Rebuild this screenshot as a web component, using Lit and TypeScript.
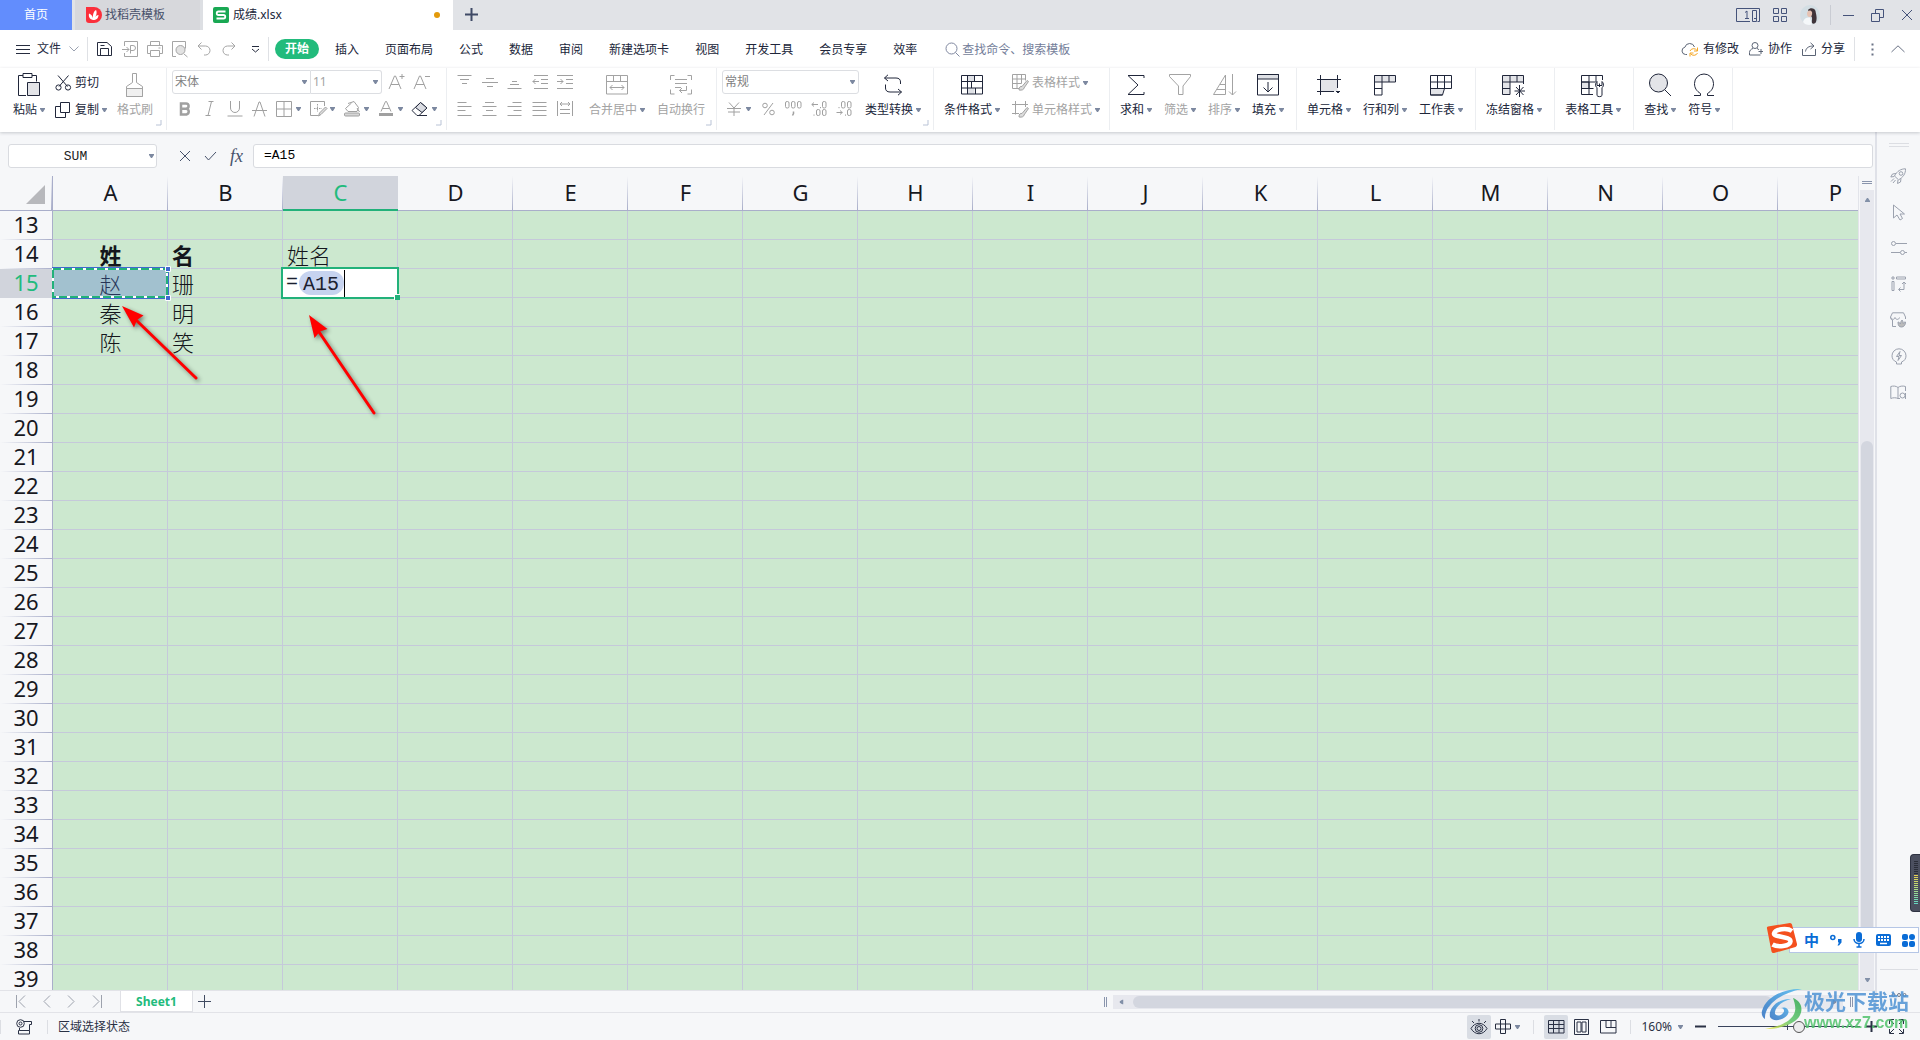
import { LitElement, html, svg, css, nothing } from "lit";
import { customElement } from "lit/decorators.js";
import { classMap } from "lit/directives/class-map.js";

const ic = (w: number, h: number, body: unknown) => html`<svg class="ic" width=${w} height=${h} viewBox="0 0 ${w} ${h}" aria-hidden="true">${body}</svg>`;
const caret = html`<svg class="caret" width="5" height="4" viewBox="0 0 5 4" aria-hidden="true"><path d="M0 0h5v1L3 4H2L0 1z" /></svg>`;
const corner = html`<svg class="corner" width="6" height="6" viewBox="0 0 6 6" aria-hidden="true"><path d="M5 0v5H0" /></svg>`;

const I = {
  menu: ic(15, 11, svg`<path d="M0 1.5h14M0 5.5h14M0 9.5h14"/>`),
  chevDown: ic(10, 6, svg`<path d="M.5.5l4.5 4.5L9.5.5"/>`),
  save: ic(15, 16, svg`<path d="M.5 1.5h9.500l4.500 4v9H.5zM3.500 14.500v-7h8v7M3.500 4.500h4"/>`),
  exportPdf: ic(17, 16, svg`<path d="M2.500 5V.5h13v15h-13V12M0 8.500h7M4.500 6l2.500 2.500L4.500 11M8.500 12.500V4.500h2.500a2.500 2.500 0 0 1 0 5H9"/>`),
  print: ic(16, 16, svg`<path d="M3.500 4.500v-4h9v4M3.500 12.500h-3v-8h15v8h-3M3.500 9.500h9v6h-9zM11.500 7h2"/>`),
  preview: ic(16, 16, svg`<path d="M4 15.500H.5V.5h13v7M12 13l3.500 3"/><circle cx="8.500" cy="9" r="4.500" fill="#e2e2e2"/>`),
  undo: ic(14, 14, svg`<path d="M4.500.5L1 4l3.500 3.500M1 4h7.500a4.500 4.500 0 0 1 0 9H7"/>`),
  redo: ic(14, 14, svg`<path d="M9.500.5L13 4 9.500 7.500M13 4H5.500a4.500 4.500 0 0 0 0 9H7"/>`),
  more: ic(9, 8, svg`<path d="M1 1.500h7M1 4l3.500 3L8 4"/>`),
  search: ic(15, 15, svg`<circle cx="6.500" cy="6.500" r="5.500"/><path d="M10.500 10.500l4 4"/>`),
  cloud: ic(18, 15, svg`<path d="M6 12.500H4.500a3.700 3.700 0 0 1-.6-7.300A5 5 0 0 1 13.500 5"/><g stroke="#f5a623"><path d="M9 9a4 4 0 0 1 7-.5M16.500 5.500v3.500H13M16.500 11a4 4 0 0 1-7 .5M9 14.500V11h3.500"/></g>`),
  coop: ic(15, 14, svg`<circle cx="6" cy="3.500" r="3"/><path d="M4 6.500C2 7 .5 8.500.5 10.500v2.500h11M8 6.500c1 .3 1.800.8 2 1.500M12 7v5M9.500 9.500H14"/>`),
  share: ic(15, 14, svg`<path d="M.5 7v6.500h13V7M3.500 9.500c.5-3.500 3-5.500 8-5.500M8.500.8L12 4 8.500 7"/>`),
  dots: ic(3, 13, svg`<path d="M.5 1.500h2M.5 6.500h2M.5 11.500h2" stroke-width="2"/>`),
  chevUp: ic(14, 8, svg`<path d="M.5 7L7 .8 13.500 7"/>`),
  paste: ic(22, 24, svg`<path d="M5 2.500H.5v20H8M14 2.500h4.500v6M5 .5h9v4H5z"/><path d="M9.500 9.500h12v13h-12z" fill="#e3e4e8"/>`),
  cut: ic(17, 16, svg`<path d="M3 .5l9.500 11M13.500.5L4 11.500"/><circle cx="3.500" cy="12.500" r="2.600"/><circle cx="13" cy="12.500" r="2.600"/>`),
  copy: ic(16, 16, svg`<path d="M5.500.5h9v10h-9zM5.500 4.500h-5v11h10v-5"/>`),
  brush: ic(20, 25, svg`<path d="M7.500 9.500v-9h4v9l6 4v3h-16v-3zM1.500 15.500v8h16v-8"/><path d="M1.500 15.500h16v8h-16z" fill="#f0f0f0"/>`),
  aPlus: ic(17, 17, svg`<path d="M1 16L6.500 3h1L13 16M3 11.500h8M11.500 3.500h5M14 1v5"/>`),
  aMinus: ic(18, 17, svg`<path d="M1 16L6.500 3h1L13 16M3 11.500h8M12 3.500h5"/>`),
  bold: ic(12, 14, svg`<path d="M2 1.500h5a2.600 2.600 0 0 1 0 5.200H2zM2 6.700h5.500a3 3 0 0 1 0 5.800H2z" stroke-width="2.500"/>`),
  italic: ic(10, 15, svg`<path d="M3.500.5h5M.5 14.500h5M6.500.5l-3.500 14"/>`),
  underline: ic(16, 16, svg`<path d="M3.500 0v7a4.500 4.500 0 0 0 9 0V0M.5 15h15"/>`),
  strike: ic(16, 16, svg`<path d="M2 15.500L7 1h1l5 14.500M0 9.500h15"/>`),
  borders: ic(16, 16, svg`<path d="M.5.5h15v15H.5zM8 .5v15M.5 8h15"/>`),
  pencilGrid: ic(17, 16, svg`<path d="M8 14.500H.5V.5h14V5"/><path d="M4 7.500h8M7.500 3v8" stroke-dasharray="1.500 1"/><path d="M8.500 15l1-3 6-6 1.500 1.500-6 6z" fill="#ddd"/>`),
  fill: ic(17, 16, svg`<path d="M4 2.500l6-2 4.500 6-1.500 4H4L1.500 7.500 7.500 2"/><path d="M13 7l2.500 4"/><rect x=".5" y="12" width="15" height="3" rx="1" fill="#d6d6d6"/>`),
  fontColor: ic(14, 16, svg`<path d="M2 10.500L6.500.5h1l4.500 10M3.500 7.500h7"/><path d="M0 13.500h14" stroke-width="3"/>`),
  eraser: ic(18, 16, svg`<path d="M1 9.500L9.500 1.500l6.500 5.500-8 7.500H6z" fill="#fff"/><path d="M4.500 6.500L9.500 1.500l6.500 5.500-5 4.500z" fill="#dadce2"/><path d="M6 14.500h10"/>`),
  vTop: ic(15, 14, svg`<path d="M.5.5h14M3 4.500h9M5 8.500h5"/>`),
  vMid: ic(16, 14, svg`<path d="M4 3.500h8M0 7.500h16M5 11.500h6"/>`),
  vBot: ic(15, 14, svg`<path d="M5 6.500h5M3 9.500h9M.5 13.500h14"/>`),
  outdent: ic(16, 14, svg`<path d="M2 .5h14M9 4.500h7M9 8.500h7M2 13.500h14M.8 6.500H7M3.500 4L1 6.500 3.500 9"/>`),
  indent: ic(16, 14, svg`<path d="M0 .5h16M9 4.500h7M9 8.500h7M0 13.500h16M0 6.500h6M3.500 4L6 6.500 3.500 9"/>`),
  left: ic(15, 14, svg`<path d="M.5.5h9M.5 4.500h14M.5 8.500h8M.5 13.500h14"/>`),
  center: ic(15, 14, svg`<path d="M3 .5h9M.5 4.500h14M4 8.500h7M.5 13.500h14"/>`),
  right: ic(15, 14, svg`<path d="M5.500.5h9M.5 4.500h14M6.500 8.500h8M.5 13.500h14"/>`),
  justify: ic(15, 14, svg`<path d="M.5.5h14M.5 4.500h14M.5 8.500h14M.5 13.500h14"/>`),
  distribute: ic(16, 15, svg`<path d="M.5 0v15M15.500 0v15M3 3h10M5 1L3 3l2 2M11 1l2 2-2 2M3 8.500h10M3 12.500h10"/>`),
  merge: ic(22, 20, svg`<path d="M.5.5h21v18.500H.5zM.5 6.500h21M7.500.5v6M14.500.5v6M4 12.500h14M6.500 10L4 12.500 6.500 15M15.500 10l2.500 2.500-2.500 2.500"/>`),
  wrap: ic(22, 20, svg`<path d="M4.500.5h-4V5M17.500.5h4V5M.5 14.500v4.500h4M21.500 14.500v4.500h-4M5 4.500h12M5 8.500h12M5 12.500h6M16.500 11v4.500h-7M12 13l-2.500 2.500L12 18"/>`),
  yen: ic(14, 14, svg`<path d="M2 .5l5 5.500L12 .5M0 6.500h14M1 10h12M7 6v8"/>`),
  percent: ic(13, 14, svg`<circle cx="3" cy="3.500" r="2.300"/><circle cx="10" cy="10.500" r="2.300"/><path d="M11 1L2 13"/>`),
  thousand: ic(17, 15, svg`<rect x=".5" y=".5" width="3.500" height="6.500" rx="1.500"/><rect x="6.500" y=".5" width="3.500" height="6.500" rx="1.500"/><rect x="12.500" y=".5" width="3.500" height="6.500" rx="1.500"/><path d="M8.500 10.500v2l-1 2" stroke-width="1.500"/>`),
  decMore: ic(16, 15, svg`<path d="M.8 3.500H7M3 1.500l-2.200 2L3 5.500M9.500 6v1.200M3 13.500v1.200"/><rect x="11.500" y=".5" width="3.500" height="6.500" rx="1.500"/><rect x="5.500" y="8.500" width="3.500" height="6" rx="1.500"/><rect x="11.500" y="8.500" width="3.500" height="6" rx="1.500"/>`),
  decLess: ic(16, 15, svg`<path d="M.5 11.500h6M4 9.500l2.200 2L4 13.500M9.500 13.500v1.200M3 6v1.200"/><rect x="5.500" y=".5" width="3.500" height="6.500" rx="1.500"/><rect x="11.500" y=".5" width="3.500" height="6.500" rx="1.500"/><rect x="11.500" y="8.500" width="3.500" height="6" rx="1.500"/>`),
  convert: ic(20, 22, svg`<path d="M5 .8L1.500 4 5 7M1.500 4H13c3 0 4.500 1.500 4.500 4v2M15 15l3.500 3-3.500 3.200M18.500 18H7c-3 0-4.500-1.500-4.500-4v-3.500"/>`),
  cond: ic(22, 20, svg`<path d="M6.500.5h7v6h-7zM6.500 13h7v6h-7z" fill="#dfe1e6" stroke="none"/><path d="M.5.5h21v18.500H.5zM.5 6.500h21M.5 13h21M6.500.5V13M13.500.5v6M10.500 6.500V13M6.500 13v6M14.500 13v6"/>`),
  tableStyle: ic(18, 17, svg`<path d="M7 14.500H.5V.5h13v6M.5 5h13M.5 9.500h9M5 .5v14M9.500.5v9"/><path d="M7 16c0-3 1.500-4 3-3.500l5-6 1.500 1-4.500 6.500c0 1.500-2 2.500-5 2z" fill="#ddd"/>`),
  cellStyle: ic(18, 17, svg`<path d="M3.500 0v13.500M0 3.500h16M13.500 0v6M0 12.500h7"/><path d="M7 16c0-3 1.500-4 3-3.500l5-6 1.500 1-4.500 6.500c0 1.500-2 2.500-5 2z" fill="#ddd"/>`),
  sum: ic(18, 22, svg`<path d="M17 4V1.500H1L11 11 1 20.500h16V18"/>`),
  filter: ic(22, 22, svg`<path d="M.5.5h21v2L14 12v8.500H9.500V12L.5 2.500z"/>`),
  sort: ic(23, 22, svg`<path d="M.5 20.500L12.500 1v19.500zM7 10.500h5.500M4 15.500h8.500M19.500 0v21M16 17.500l3.500 3.500 3.500-3.500"/>`),
  fillDown: ic(22, 22, svg`<path d="M.5.5h21v4.500H.5z" fill="#dfe1e6"/><path d="M.5.5h21v20.500H.5zM11 8v10M6.500 13.500L11 18l4.500-4.500"/>`),
  cell: ic(24, 20, svg`<path d="M3.500 4.500h17v12h-17z" fill="#e3e4e8" stroke="none"/><path d="M3.500 0v20M20.500 0v13M0 4.500h24M0 16.500h17M19 16.500h4" /><path d="M20 17h2" stroke-width="2"/>`),
  rowCol: ic(22, 22, svg`<path d="M.5 1.500h21V8H.5z" fill="#e3e4e8"/><path d="M.5 1.500v19.500H8V8M.5 14.500H8M8 1.500V8M15 1.500V8"/>`),
  sheet: ic(22, 22, svg`<path d="M.5 14.500h14l-2 6.500H.5z" fill="#e3e4e8"/><path d="M.5 1.500h21v13H.5zM.5 8h21M7.500 1.500v13M14.500 1.500v13M.5 14.500V21h12"/>`),
  freeze: ic(24, 23, svg`<path d="M.5 1.500h21V8H8v12.500H.5z" fill="#e3e4e8"/><path d="M.5 8H8M.5 14.500H8M8 1.500V8M15 1.500V8M21.500 8v2M17.500 11v12M12.500 17h10.500M14 13l7.500 8M21.500 13l-7.500 8"/>`),
  tableTool: ic(24, 23, svg`<path d="M.5 8H8v6.500H.5z" fill="#e3e4e8"/><path d="M12 20.500H.5V1.500h21V6M.5 8h14M.5 14.500h12M8 1.500v19M15 1.500V8M18.500 13V9.500M16 7.500c-2 2-2 5 0 6v8c.5 1.500 4.500 1.500 5 0v-8c2-1 2-4 0-6v4h-5z"/>`),
  find: ic(23, 24, svg`<circle cx="9.500" cy="10" r="9" fill="#e3e4e8"/><path d="M16 17l6 6"/>`),
  omega: ic(22, 24, svg`<path d="M1 22.500h6.500v-2C3.500 18 1.500 15 1.500 10.500a9.500 9.500 0 0 1 19 0c0 4.500-2 7.500-6 10v2H21"/>`),
  switcher: ic(24, 15, svg`<path d="M14 13.500H.5V.5h23v13h-2M16.500 2.500h4v11h-4zM18 10.500h2"/><path d="M9 4.500l2-1.500v8M9 10.500h4"/>`),
  apps: ic(14, 14, svg`<path d="M.5.5h5v5h-5zM8.500.5h5v5h-5zM.5 8.500h5v5h-5zM8.500 8.500h5v5h-5z"/>`),
  min: ic(11, 12, svg`<path d="M0 6.500h11"/>`),
  restore: ic(13, 13, svg`<path d="M.5 4.500h8v8h-8zM4.500 4.500v-4h8v8h-4"/>`),
  close: ic(12, 12, svg`<path d="M1 1l10 10M11 1L1 11"/>`),
  plus: ic(13, 13, svg`<path d="M6.500 0v13M0 6.500h13"/>`),
  x: ic(12, 12, svg`<path d="M1 1l10 10M11 1L1 11"/>`),
  check: ic(13, 10, svg`<path d="M1 5l3.500 4L12 1"/>`),
  first: ic(10, 13, svg`<path d="M.5 0v13M9 .5L3 6.500l6 6"/>`),
  prev: ic(8, 13, svg`<path d="M7 .5L1 6.500l6 6"/>`),
  next: ic(8, 13, svg`<path d="M1 .5l6 6-6 6"/>`),
  last: ic(10, 13, svg`<path d="M9.500 0v13M1 .5l6 6-6 6"/>`),
  record: ic(17, 16, svg`<circle cx="4.500" cy="4.500" r="3.800"/><circle cx="4.500" cy="4.500" r="1.500"/><path d="M8 2.500h7.500v3h-2v6M3.500 9v2.500H2.500v3.500h11v-3.500h-10"/>`),
  eye: ic(18, 17, svg`<path d="M1 10.500C5 3.500 13 3.500 17 10.500 13 17.500 5 17.500 1 10.500zM9 1v2.500M2 3l2 2M16 3l-2 2"/><circle cx="9" cy="10.500" r="3.800"/><circle cx="9" cy="10.500" r="2"/>`),
  cross: ic(17, 16, svg`<path d="M5.500.5h5v14h-5zM.5 5h15v5H.5z"/>`),
  gridView: ic(17, 14, svg`<path d="M.5.5h15.500v12.500H.5zM.5 4.500H16M.5 8.500H16M5.500.5V13M11 .5V13"/>`),
  pageView: ic(16, 16, svg`<path d="M.5.5h14v15H.5zM3 3h4v10H3zM8 3h4v10H8z"/>`),
  breakView: ic(17, 14, svg`<path d="M.5.5H16V13H.5zM6 .5v7h10M11 .5v7"/>`),
  minus: ic(11, 3, svg`<path d="M0 1.500h11" stroke-width="2"/>`),
  plusBold: ic(11, 11, svg`<path d="M0 5.500h11M5.500 0v11" stroke-width="2"/>`),
  full: ic(15, 15, svg`<path d="M.5 5V.5H5M1 1l4 4M10 .5h4.500V5M14 1l-4 4M.5 10v4.500H5M1 14l4-4M10 14.500h4.500V10M14 14l-4-4"/>`),
  rocket: ic(17, 16, svg`<path d="M4.500 8C7 3 11 .8 15.500.8 15.800 5.500 13 9.500 8.500 11.800zM6 5.500L2.500 6 .8 9l3.500-.5M11 10.500l-.5 3.500L7.500 15.500 8 12M4 10.500l-3 3M5.500 12l-2.500 3"/><circle cx="11" cy="5.500" r="1.800"/>`),
  pointer: ic(14, 17, svg`<path d="M1.500 1v13l3.500-3 3 5 2.500-1.500-2.500-4.500H12.500z"/>`),
  sliders: ic(16, 15, svg`<circle cx="2.500" cy="2.500" r="2"/><path d="M5 2.500h11M0 11.500h9M14 11.500h2"/><circle cx="11.500" cy="11.500" r="2"/>`),
  pivot: ic(16, 16, svg`<path d="M1 1h2v2H1zM5.500 1h9v2h-9zM1 5.500h2v9H1zM8 13.500h5V6.500M9.500 11.500l-2 2 2 2M11 8l2-2 2 2"/>`),
  gallery: ic(17, 16, svg`<path d="M6 14.500H2.500V8C.5 8 .5 5 .5 5L2.500.8h11L15.500 5v2M.5 5c1 3 4 3 4.500.5.8 2.500 4 2.500 4.500 0"/><path d="M8 10c1 0 2 1 2.500 2 0-2 1-3.500 1.500-4 .8.800 1.200 2 1.200 3.500.5-1 1.300-1.500 2.300-1.500 0 3-1.500 5-4 5S8 13.500 8 10z" fill="#bbb"/>`),
  bulb: ic(16, 17, svg`<path d="M5.500 16h5M5.500 16v-2C2.500 13 1 10.500 1 7.800a7 7 0 0 1 14 0c0 2.700-1.500 5.200-4.500 6.200v2M9 3.500L5.500 8.500H8l-1 4 3.500-5H8z"/>`),
  book: ic(17, 15, svg`<path d="M8 2.500v11C6 12.500 3 12.500.8 13.500V1.500C3 .8 6 .8 8 2.500 10 .8 13.500.8 15.500 1.500V6M8 13.500h2"/><circle cx="12.500" cy="10.500" r="2.500"/><path d="M15.500 8v6"/>`),
};

const COLS = "ABCDEFGHIJKLMNOP".split("");
const ROWS = Array.from({ length: 27 }, (_, i) => i + 13);
const CELLS: Record<string, string> = {
  A14: "姓", B14: "名", C14: "姓名",
  A15: "赵", B15: "珊",
  A16: "秦", B16: "明",
  A17: "陈", B17: "笑",
};
const MENU = ["插入", "页面布局", "公式", "数据", "审阅", "新建选项卡", "视图", "开发工具", "会员专享", "效率"];

const big = (icon: unknown, label: string, drop = true, off = false) => html`
  <button class=${classMap({ big: true, off })}><span class="bigicon">${icon}</span><span class="lbl">${label}${drop ? caret : nothing}</span></button>`;
const small = (icon: unknown, label: string, drop = true, off = false) => html`
  <button class=${classMap({ small: true, off })}><span class="smallicon">${icon}</span>${label}${drop ? caret : nothing}</button>`;
const tool = (icon: unknown, name: string) => html`<button class="tool" aria-label=${name}>${icon}</button>`;
const split = (icon: unknown, name: string, cls = "") => html`<button class="split ${cls}" aria-label=${name}><span class="spliticon">${icon}</span>${caret}</button>`;

@customElement("app-root")
export class AppRoot extends LitElement {
  static styles = css`
    :host {
      display: flex; flex-direction: column; height: 100vh; overflow: hidden; position: relative;
      font: 12px/16px "Noto Sans", "Noto Sans CJK SC", sans-serif; color: #20263a; background: #f6f7f9;
    }
    * { box-sizing: border-box; }
    button { font: inherit; color: inherit; background: none; border: 0; padding: 0; margin: 0; white-space: nowrap; }
    input, select { font: inherit; color: inherit; margin: 0; }
    .ic { display: block; flex: none; fill: none; stroke: currentColor; stroke-width: 1; overflow: visible; }
    .caret { flex: none; fill: #7c88a0; margin-left: 3px; }
    .corner { position: absolute; right: 4px; bottom: 4px; fill: none; stroke: #b9c3d6; }
    .spacer { flex: 1; }

    .title { display: flex; height: 30px; flex: none; background: #e1e3e7; }
    .tab { display: flex; align-items: center; height: 30px; }
    .home { width: 72px; justify-content: center; background: #628dfd; color: #fff; }
    .docer { width: 128px; margin-left: 3px; padding-left: 11px; gap: 3px; background: #d7d8dc; color: #47506a; border-right: 3px solid #dddfe3; }
    .doc { width: 250px; padding: 0 13px 0 10px; gap: 4px; background: #fff; }
    .unsaved { width: 6px; height: 6px; border-radius: 50%; background: #e39a0b; }
    .newtab { padding: 0 12px; height: 28px; color: #3f4a66; }
    .newtab .ic { stroke-width: 2; }
    .winctl { display: flex; align-items: center; color: #45537a; padding-right: 7px; }
    .g13 { margin-right: 13px; }
    .g17 { margin-right: 17px; }
    .vline { width: 1px; height: 20px; margin: 0 12px 0 10px; background: #c9ccd3; }

    .menu { display: flex; height: 38px; flex: none; align-items: center; background: #fff; }
    .quick { display: flex; align-items: center; padding-left: 16px; color: #262c3f; }
    .file { display: flex; align-items: center; gap: 6px; }
    .file .ic:last-child { color: #9aa1b0; margin-left: 2px; }
    .sep { width: 1px; height: 24px; background: #dfe1e5; margin: 0 8px; }
    .qa { display: flex; gap: 10px; align-items: center; color: #a5a5a5; margin-left: 1px; }
    .qa button { width: 15px; }
    .qa button:first-child, .qa button:last-child { color: #262c3f; }
    .qa button:last-child { margin-left: 4px; width: 9px; }
    .pill { background: #22bb7c; color: #fff; font-weight: 700; border-radius: 10px; height: 20px; padding: 0 10px; line-height: 20px; margin: 0 3px 0 -2px; }
    .mi { padding: 2px 13px 0; }
    .search { display: flex; align-items: center; gap: 2px; margin-left: 15px; color: #8088a0; flex: 1; }
    .search input { border: 0; background: none; padding: 0; outline: 0; width: 140px; height: 20px; }
    .search input::placeholder { color: #737d99; opacity: 1; }
    .acts { display: flex; align-items: center; color: #20263a; padding-right: 15px; }
    .act { display: flex; align-items: center; gap: 4px; margin-right: 10px; }
    .act .ic { color: #5b6475; }
    .acts .sep { margin: 0 16px 0 -1px; }
    .grey { color: #6a7285; }

    .ribbon { display: flex; height: 64px; flex: none; background: #fff; box-shadow: 0 1px 3px rgba(60, 66, 80, 0.25); position: relative; z-index: 1; }
    .group { display: flex; position: relative; border-right: 1px solid #eceef1; gap: 12px; padding: 0 12px 0 10px; height: 62px; }
    .group.tight { gap: 0; padding: 0 0 0 5px; }
    .big { display: flex; flex-direction: column; align-items: center; padding-top: 3px; height: 53px; }
    .bigicon { display: flex; align-items: center; justify-content: center; height: 28px; }
    .lbl, .small, .split { display: flex; align-items: center; }
    .lbl { height: 22px; }
    .off { color: #a3a3a3; }
    .stack { display: flex; flex-direction: column; }
    .stack.s { padding-top: 1px; }
    .small { height: 27px; }
    .smallicon { width: 20px; }
    .row { display: flex; align-items: center; height: 27px; }
    .tool { width: 25px; height: 27px; display: flex; align-items: center; justify-content: center; color: #a0a0a0; }
    .split { width: 34px; height: 27px; color: #a0a0a0; padding-left: 3px; }
    .spliticon { width: 18px; display: flex; justify-content: center; }
    .dark { color: #262c3f; }
    .group.clip { width: 167px; gap: 10px; padding: 0 0 0 13px; }
    .font { width: 280px; }
    .align { width: 270px; }
    .num { width: 217px; }
    .styles { width: 176px; }
    .sel { position: relative; display: flex; align-items: center; height: 24px; border: 1px solid #dcdee2; }
    .sel select { appearance: none; border: 0; background: none; color: #7f7f7f; padding: 0 2px; width: 100%; height: 22px; outline: 0; }
    .sel .caret { position: absolute; right: 3px; }
    .fname { width: 139px; border-radius: 3px 0 0 3px; }
    .fsize { width: 71px; border-left: 0; border-radius: 0 3px 3px 0; margin-right: 2px; }
    .nfmt { width: 137px; border-radius: 3px; }
    .sel.fsize select { color: #a3a3a3; }
    .gapl { margin-left: 12px; }
    .gaps { margin-left: 6px; }

    .body { display: flex; flex: 1; min-height: 0; }
    .main { display: flex; flex-direction: column; flex: 1; min-width: 0; }
    .fbar { display: flex; align-items: center; height: 44px; flex: none; padding: 4px 2px 0 8px; color: #47526b; }
    .box { height: 24px; background: #fff; border: 1px solid #d9dbe0; border-radius: 3px; }
    .namebox { width: 149px; position: relative; display: flex; align-items: center; }
    .namebox input { width: 100%; border: 0; background: none; text-align: center; padding: 1px 14px 0 0; outline: 0; color: #222; font: 13px "Liberation Mono", monospace; }
    .namebox .caret { position: absolute; right: 2px; }
    .fbtns { display: flex; align-items: center; width: 96px; padding-left: 22px; gap: 13px; }
    .fx { font: italic 18px/20px "Liberation Serif", serif; }
    .formula { flex: 1; min-width: 0; padding: 0 10px 1px; outline: 0; color: #000; font: 13px "Liberation Mono", monospace; }

    .sheetwrap { display: flex; flex: 1; min-height: 0; }
    .grid { flex: 1; min-width: 0; overflow: hidden; position: relative; border-right: 1px solid #e2e4ea; }
    table { table-layout: fixed; border-collapse: separate; border-spacing: 0; width: 1893px; }
    .c0 { width: 53px; }
    .cn { width: 115px; }
    th { font: 22px/28px "Noto Sans", sans-serif; color: #17181f; padding: 0 0 2px; text-align: center; background: linear-gradient(#f6f7f9, #a9aeca) right / 1px 100% no-repeat #f6f7f9; border-bottom: 1px solid #a9aeca; height: 35px; }
    tbody th { height: 29px; line-height: 25px; padding: 0 0 3px; border: 0; border-right: 1px solid #a9aeca; background: linear-gradient(90deg, #f6f7f9, #a9aeca) bottom / 100% 1px no-repeat #f6f7f9; }
    thead th.on { background: #d1d4dc; color: #22bb7c; border-bottom: 2px solid #22b17a; }
    tbody th.on { background: #d1d4dc; color: #22bb7c; }
    th.all { text-align: right; padding: 0 7px 6px 0; vertical-align: bottom; border-right: 1px solid #a9aeca; line-height: 0; }
    .all svg { fill: #b7b8bc; }
    td { position: relative; height: 29px; padding: 0 3px 0 4px; background: #cce8cf; border-right: 1px solid #c5c9da; border-bottom: 1px solid #c5c9da; font: 300 22px/26px "Noto Sans CJK SC", sans-serif; color: #14161c; white-space: nowrap; }
    td.mid { text-align: center; }
    td.strong { font-weight: 700; }
    .ants { position: absolute; left: -5px; top: -5px; z-index: 1; }
    .editor { position: absolute; left: -2px; top: -2px; width: 118px; height: 32px; z-index: 1; display: flex; align-items: center; border: 2px solid #22b17a; background: #fff; font: 20px/28px "Liberation Mono", monospace; color: #1b2030; padding-left: 3px; outline: 0; }
    .ref { background: #c7d3ef; border-radius: 12px; height: 24px; line-height: 27px; padding: 0 5px 0 4px; margin-left: 1px; }
    .cursor { width: 1px; height: 27px; background: #000; }
    .knob { position: absolute; right: -3px; bottom: -3px; width: 6px; height: 6px; background: #22b17a; border: 1px solid #fff; border-width: 1px 0 0 1px; }
    .arrows { position: absolute; left: 0; top: 0; z-index: 2; filter: drop-shadow(2px 2px 2px rgba(0, 0, 0, 0.45)); pointer-events: none; }
    .vs { width: 16px; display: flex; flex-direction: column; align-items: center; padding: 5px 0 0; }
    .vhead { width: 10px; height: 3px; border: 1px solid #8a95ad; border-width: 1px 0; margin-bottom: 6px; }
    .vtrack { flex: 1; width: 14px; background: #e7e8ee; display: flex; flex-direction: column; align-items: center; padding: 8px 0; }
    .vtrack .caret, .htrack .caret { margin: 0; fill: #8290a8; }
    .up { display: flex; transform: rotate(180deg); }
    .vpre { flex: 239; }
    .vthumb { flex: 500; width: 12px; border-radius: 6px; background: #d3d6df; }
    .vpost { flex: 36; }

    .tabs { display: flex; height: 22px; flex: none; border-top: 1px solid #e2e3e8; align-items: center; }
    .nav { display: flex; width: 120px; padding: 0 18px 0 16px; justify-content: space-between; color: #9da2ad; }
    .sheet { height: 21px; width: 73px; background: #fff; color: #22bb7c; font-weight: 700; border: 1px solid #e0e1e6; border-top: 0; margin-right: 5px; padding-top: 1px; }
    .add { color: #414b61; }
    .grip { width: 3px; height: 10px; border: 1px solid #8a95ad; border-width: 0 1px; }
    .htrack { width: 730px; height: 14px; margin: 0 7px 0 6px; background: #e7e8ee; display: flex; align-items: center; padding: 0 6px; }
    .hthumb { flex: 636; height: 12px; border-radius: 6px; background: #d3d6df; margin-left: 9px; }
    .hpost { flex: 60; }
    .lf { display: flex; transform: rotate(90deg); }
    .rt { display: flex; transform: rotate(-90deg); }
    .tabend { width: 22px; }

    .side { width: 45px; flex: none; border-left: 2px solid #dfe1e8; display: flex; flex-direction: column; align-items: center; padding-top: 11px; color: #9ba1ae; }
    .handle { width: 20px; height: 4px; border: 1px solid #dcdee3; border-width: 1px 0; margin-bottom: 11px; }
    .sb { height: 36px; width: 36px; display: flex; align-items: center; justify-content: center; }
    .sideend { border-top: 1px solid #dcdee3; width: 38px; height: 43px; color: #6f7787; padding-top: 22px; display: flex; justify-content: center; }

    .status { display: flex; height: 28px; flex: none; align-items: center; border-top: 1px solid #e2e3e8; color: #2a3145; }
    .slead { display: flex; align-items: center; border-left: 1px solid #dcdee3; height: 14px; padding-left: 15px; }
    .ssep { width: 1px; height: 14px; background: #dcdee3; margin: 0 10px; }
    .ssep.first { margin-left: 14px; }
    .ssep.near { margin-left: 8px; }
    .sv { width: 24px; height: 24px; display: flex; align-items: center; justify-content: center; border-radius: 2px; }
    .sv.mid { margin: 0 2px; }
    .sv.on { background: #d9dde4; }
    .zoom { display: flex; align-items: center; gap: 12px; color: #2a3145; padding-right: 16px; }
    .pct { display: flex; align-items: center; }
    .pct .caret { margin-left: 6px; }
    .range { appearance: none; width: 142px; height: 16px; background: linear-gradient(#39435c, #39435c) center / 100% 1px no-repeat, linear-gradient(#39435c, #39435c) 69px 50% / 1px 6px no-repeat; outline: 0; margin-right: -6px; }
    .range::-webkit-slider-thumb { appearance: none; width: 12px; height: 12px; border-radius: 50%; background: #ececee; border: 1px solid #555; }

    .meter { position: absolute; right: 0; bottom: 128px; width: 10px; height: 58px; background: #4b4f5f; border: 1px solid #2f3342; border-right: 0; border-radius: 4px 0 0 4px; z-index: 3; padding: 6px 2px 6px 3px; }
    .bars { height: 100%; background: repeating-linear-gradient(transparent 0 1px, #4b4f5f 1px 2px), linear-gradient(#2a2d38 0 30%, #e8cf4e 32%, #b5dd7c 60%, #5cd6c8); }
    .ime { position: absolute; right: 1px; bottom: 87px; height: 26px; width: 130px; background: #fff; border: 1px solid #b5c6e6; z-index: 3; display: flex; align-items: center; gap: 11px; padding-left: 14px; color: #0a6cd6; font: 700 15px/24px "Noto Sans CJK SC", sans-serif; }
    .ime .ic { stroke: none; fill: currentColor; }
    .ime .sogou { position: absolute; left: -25px; top: -6px; }
    .mark { position: absolute; right: 9px; bottom: 7px; width: 150px; z-index: 3; display: flex; gap: 1px; pointer-events: none; opacity: 0.85; }
    .mark p { margin: 0; white-space: nowrap; }
    .mark .cn1 { font: 700 21px/25px "Noto Sans CJK SC", sans-serif; color: #4f93d4; }
    .mark .en1 { font: 700 16px/20px "Liberation Sans", sans-serif; color: #52c36d; }
  `;

  private cell(c: string, r: number) {
    const id = `${c}${r}`;
    const bold = r === 14 && c !== "C";
    return html`<td class=${classMap({ mid: c === "A", strong: bold })}>${CELLS[id] ?? nothing}${id === "A15"
      ? html`<svg class="ants" width="126" height="40" viewBox="0 0 126 40" aria-hidden="true">
          <rect x="5" y="5" width="114" height="28" fill="#4d72cf" fill-opacity=".33" />
          <path d="M4 3.500H120.500V34.500H4" fill="none" stroke="#4169d0" />
          <rect x="5" y="5" width="114" height="28" fill="none" stroke="#fff" stroke-width="2" />
          <rect x="5" y="5" width="114" height="28" fill="none" stroke="#22b17a" stroke-width="2" stroke-dasharray="8 3" />
          <path d="M117.500 2.500h5v5h-5zM117.500 31.500h5v5h-5z" fill="#4169d0" stroke="#fff" />
        </svg>` : nothing}${id === "C15"
      ? html`<div class="editor" role="textbox" aria-label="C15" tabindex="0"><span>=</span><span class="ref">A15</span><span class="cursor"></span><span class="knob"></span></div>` : nothing}</td>`;
  }

  render() {
    return html`
      <header class="title">
        <button class="tab home">首页</button>
        <button class="tab docer">${ic(16, 16, svg`<path d="M0 0h8a8 8 0 1 1 0 16H3a3 3 0 0 1-3-3z" fill="#fb2f3b" stroke="none"/><path d="M7 13C3 12 2.500 9 3 6.500c2 .5 3.500 2.500 4 4.500C6.500 7 8 4 10 3c1.500 3 0 6-1.500 8 1-2 2.500-3 4-3 0 3-2 5-5.500 5z" fill="#fff" stroke="none"/>`)}找稻壳模板</button>
        <button class="tab doc">${ic(16, 16, svg`<rect width="16" height="16" rx="2" fill="#19a853" stroke="none"/><path d="M12.500 4.500H5.500a1.700 1.700 0 0 0 0 3.500h5a1.700 1.700 0 0 1 0 3.500h-7" stroke="#fff" stroke-width="1.800"/>`)}成绩.xlsx<span class="spacer"></span><span class="unsaved"></span></button>
        <button class="newtab" aria-label="新建">${I.plus}</button>
        <span class="spacer"></span>
        <div class="winctl">
          <button class="g13" aria-label="窗口">${I.switcher}</button>
          <button class="g13" aria-label="应用">${I.apps}</button>
          ${ic(20, 20, svg`<circle cx="10" cy="10" r="10" fill="#d3dee4" stroke="none"/><path d="M8 5c2-3 7-2 7.500 1 .5 3 2 7 .5 11-1 2-3 2-4 1-.5-3 1-5-1-7z" fill="#3f343a" stroke="none"/><path d="M7 8c.5-3 4-3.500 5-1 .5 2.500-.5 5-2.500 5S7 10.500 7 8z" fill="#e6c3b4" stroke="none"/><path d="M3 17c1-4 4-5 7-4.500l2 7C8 20.500 5 19.500 3 17z" fill="#f5f8fa" stroke="none"/>`)}
          <span class="vline"></span>
          <button class="g17" aria-label="最小化">${I.min}</button>
          <button class="g17" aria-label="还原">${I.restore}</button>
          <button aria-label="关闭">${I.close}</button>
        </div>
      </header>

      <nav class="menu">
        <div class="quick">
          <button class="file">${I.menu}文件${I.chevDown}</button>
          <span class="sep"></span>
          <div class="qa">
            <button aria-label="保存">${I.save}</button><button aria-label="输出为PDF">${I.exportPdf}</button>
            <button aria-label="打印">${I.print}</button><button aria-label="打印预览">${I.preview}</button>
            <button aria-label="撤销">${I.undo}</button><button aria-label="恢复">${I.redo}</button>
            <button aria-label="更多">${I.more}</button>
          </div>
          <span class="sep"></span>
        </div>
        <button class="pill">开始</button>
        ${MENU.map((m) => html`<button class="mi">${m}</button>`)}
        <label class="search">${I.search}<input aria-label="查找命令" placeholder="查找命令、搜索模板" /></label>
        <div class="acts">
          <button class="act">${I.cloud}有修改</button>
          <button class="act">${I.coop}协作</button>
          <button class="act">${I.share}分享</button>
          <span class="sep"></span>
          <button class="grey g17" aria-label="更多">${I.dots}</button>
          <button class="grey" aria-label="收起功能区">${I.chevUp}</button>
        </div>
      </nav>

      <section class="ribbon">
        <div class="group clip">
          ${big(I.paste, "粘贴")}
          <div class="stack s">${small(I.cut, "剪切", false)}${small(I.copy, "复制")}</div>
          ${big(I.brush, "格式刷", false, true)}${corner}
        </div>
        <div class="group tight font">
          <div class="stack">
            <div class="row">
              <div class="sel fname"><select aria-label="字体"><option>宋体</option></select>${caret}</div>
              <div class="sel fsize"><select aria-label="字号"><option>11</option></select>${caret}</div>
              ${tool(I.aPlus, "增大字号")}${tool(I.aMinus, "减小字号")}
            </div>
            <div class="row">
              ${tool(I.bold, "加粗")}${tool(I.italic, "倾斜")}${tool(I.underline, "下划线")}${tool(I.strike, "删除线")}
              ${split(I.borders, "边框")}${split(I.pencilGrid, "绘图边框")}${split(I.fill, "填充颜色")}${split(I.fontColor, "字体颜色")}${split(I.eraser, "清除", "dark")}
            </div>
          </div>${corner}
        </div>
        <div class="group tight align">
          <div class="stack">
            <div class="row">${tool(I.vTop, "顶端对齐")}${tool(I.vMid, "垂直居中")}${tool(I.vBot, "底端对齐")}${tool(I.outdent, "减少缩进")}${tool(I.indent, "增加缩进")}</div>
            <div class="row">${tool(I.left, "左对齐")}${tool(I.center, "水平居中")}${tool(I.right, "右对齐")}${tool(I.justify, "两端对齐")}${tool(I.distribute, "分散对齐")}</div>
          </div>
          <span class="gapl"></span>${big(I.merge, "合并居中", true, true)}<span class="gapl"></span>${big(I.wrap, "自动换行", false, true)}${corner}
        </div>
        <div class="group tight num">
          <div class="stack">
            <div class="row"><div class="sel nfmt"><select aria-label="数字格式"><option>常规</option></select>${caret}</div></div>
            <div class="row">${split(I.yen, "货币")}${tool(I.percent, "百分比")}${tool(I.thousand, "千位分隔")}${tool(I.decMore, "增加小数位")}${tool(I.decLess, "减少小数位")}</div>
          </div>
          <span class="gaps"></span>${big(I.convert, "类型转换")}${corner}
        </div>
        <div class="group styles">
          ${big(I.cond, "条件格式")}
          <div class="stack s">${small(I.tableStyle, "表格样式", true, true)}${small(I.cellStyle, "单元格样式", true, true)}</div>
        </div>
        <div class="group">${big(I.sum, "求和")}${big(I.filter, "筛选", true, true)}${big(I.sort, "排序", true, true)}${big(I.fillDown, "填充")}</div>
        <div class="group">${big(I.cell, "单元格")}${big(I.rowCol, "行和列")}${big(I.sheet, "工作表")}</div>
        <div class="group">${big(I.freeze, "冻结窗格")}</div>
        <div class="group">${big(I.tableTool, "表格工具")}</div>
        <div class="group">${big(I.find, "查找")}${big(I.omega, "符号")}</div>
      </section>

      <div class="body">
        <div class="main">
          <div class="fbar">
            <div class="box namebox"><input aria-label="名称框" value="SUM" />${caret}</div>
            <div class="fbtns"><button aria-label="取消">${I.x}</button><button aria-label="输入">${I.check}</button><button class="fx">fx</button></div>
            <input class="box formula" aria-label="编辑栏" value="=A15" />
          </div>
          <div class="sheetwrap">
            <div class="grid">
              <table>
                <colgroup><col class="c0" />${COLS.map(() => html`<col class="cn" />`)}</colgroup>
                <thead><tr><th class="all"><svg width="19" height="19" viewBox="0 0 19 19" aria-hidden="true"><path d="M19 0v19H0z" /></svg></th>${COLS.map((c) => html`<th class=${classMap({ on: c === "C" })}>${c}</th>`)}</tr></thead>
                <tbody>${ROWS.map((r) => html`<tr><th class=${classMap({ on: r === 15 })}>${r}</th>${COLS.map((c) => this.cell(c, r))}</tr>`)}</tbody>
              </table>
              <svg class="arrows" width="400" height="260" viewBox="0 0 400 260" aria-hidden="true">
                <path d="M135 143L196 202M317 153L374 237" stroke="#f00" stroke-width="3" stroke-linecap="round" />
                <path d="M122 130L143.500 139.500 137 144 134 151.500zM309 139L327.500 153 320 155.500 314.500 162z" fill="#f00" />
              </svg>
            </div>
            <div class="vs"><span class="vhead"></span><div class="vtrack"><span class="up">${caret}</span><span class="vpre"></span><span class="vthumb"></span><span class="vpost"></span>${caret}</div></div>
          </div>
          <div class="tabs">
            <div class="nav"><button aria-label="第一张">${I.first}</button><button aria-label="上一张">${I.prev}</button><button aria-label="下一张">${I.next}</button><button aria-label="最后一张">${I.last}</button></div>
            <button class="sheet">Sheet1</button><button class="add" aria-label="新建工作表">${I.plus}</button>
            <span class="spacer"></span><span class="grip"></span>
            <div class="htrack"><span class="lf">${caret}</span><span class="hthumb"></span><span class="hpost"></span><span class="rt">${caret}</span></div>
            <span class="grip"></span><span class="tabend"></span>
          </div>
        </div>
        <aside class="side">
          <span class="handle"></span>
          ${[["rocket", "快捷"], ["pointer", "选择"], ["sliders", "属性"], ["pivot", "分析"], ["gallery", "稻壳"], ["bulb", "推荐"], ["book", "帮助"]].map(([k, n]) => html`<button class="sb" aria-label=${n}>${I[k as keyof typeof I]}</button>`)}
          <span class="spacer"></span>
          <div class="sideend">${ic(16, 6, svg`<circle cx="2.500" cy="3" r="1.500"/><circle cx="8" cy="3" r="1.500"/><circle cx="13.500" cy="3" r="1.500"/>`)}</div>
        </aside>
      </div>

      <footer class="status">
        <div class="slead">${I.record}</div><span class="ssep first"></span><span>区域选择状态</span>
        <span class="spacer"></span>
        <button class="sv on" aria-label="护眼模式">${I.eye}</button>
        <button class="split dark" aria-label="阅读模式"><span class="spliticon">${I.cross}</span>${caret}</button>
        <span class="ssep near"></span>
        <button class="sv on" aria-label="普通视图">${I.gridView}</button>
        <button class="sv mid" aria-label="页面布局">${I.pageView}</button>
        <button class="sv" aria-label="分页预览">${I.breakView}</button>
        <span class="ssep"></span>
        <div class="zoom"><button class="pct">160%${caret}</button>
          <button aria-label="缩小">${I.minus}</button>
          <input class="range" type="range" aria-label="缩放" min="0" max="100" value="58" />
          <button aria-label="放大">${I.plusBold}</button>
          <button aria-label="全屏">${I.full}</button>
        </div>
      </footer>

      <div class="meter"><div class="bars"></div></div>
      <div class="ime">
        <svg class="sogou" width="33" height="33" viewBox="0 0 33 33" aria-hidden="true"><path d="M2 6.500Q1.500 5 3 4.500L25 1q1.500 0 2 1.500L32 22q.3 2-1.500 3L9 31q-2 .3-2.500-1.500z" fill="#f4501e" /><path d="M27 9c-5-3.500-17-2-18 2.500-.5 4 17 2.500 16.500 8-.5 5-13 6-18 3" fill="none" stroke="#fff" stroke-width="4.500" /></svg>
        <span>中</span>
        ${ic(12, 12, svg`<circle cx="2.800" cy="3.500" r="2" fill="none" stroke="#0a6cd6" stroke-width="1.600"/><path d="M8 5h3.500v3.500L9 11.500H7.500L9 8.500H8z"/>`)}
        ${ic(12, 16, svg`<rect x="3" width="6" height="10" rx="3"/><path d="M1 7c0 6 10 6 10 0M6 12v3M3.500 15h5" fill="none" stroke="#0a6cd6" stroke-width="1.500"/>`)}
        ${ic(15, 12, svg`<rect width="15" height="12" rx="2"/><path d="M2 3h11M2 6h11" stroke="#fff" stroke-width="2" stroke-dasharray="2 1"/><path d="M4 9.500h7" stroke="#fff" stroke-width="1.500"/>`)}
        ${ic(13, 13, svg`<rect width="6" height="6" rx="2"/><rect x="7" width="6" height="6" rx="3"/><rect y="7" width="6" height="6" rx="2"/><rect x="7" y="7" width="6" height="6" rx="2"/>`)}
      </div>
      <div class="mark">
        <svg width="42" height="42" viewBox="0 0 42 42" aria-hidden="true">
          <defs>
            <linearGradient id="b" x1="0" y1="1" x2="1" y2="0"><stop offset="0" stop-color="#2f6fc0" /><stop offset="1" stop-color="#4db8f0" /></linearGradient>
            <linearGradient id="g" x1="0" y1="1" x2="1" y2="0"><stop offset="0" stop-color="#f2e53c" /><stop offset=".5" stop-color="#5cc46a" /><stop offset="1" stop-color="#2ea84e" /></linearGradient>
          </defs>
          <path d="M41 1C25 0 5 8 1 23c-1 4 1 7 3 8C3 17 20 5 41 1z" fill="url(#b)" />
          <path d="M30 11C18 10 7 20 9 29c2 5 14 4 18-3 2-4-2-8-7-6 3 0 4 3 2 5-3 4-9 3-8-1 1-6 8-11 16-13z" fill="url(#b)" />
          <path d="M32 10c8 3 11 11 6 19-5 7-18 12-34 12 14-2 28-8 30-18 1-5-1-10-2-13z" fill="url(#g)" />
        </svg>
        <div><p class="cn1">极光下载站</p><p class="en1">www.xz7.com</p></div>
      </div>
    `;
  }
}
